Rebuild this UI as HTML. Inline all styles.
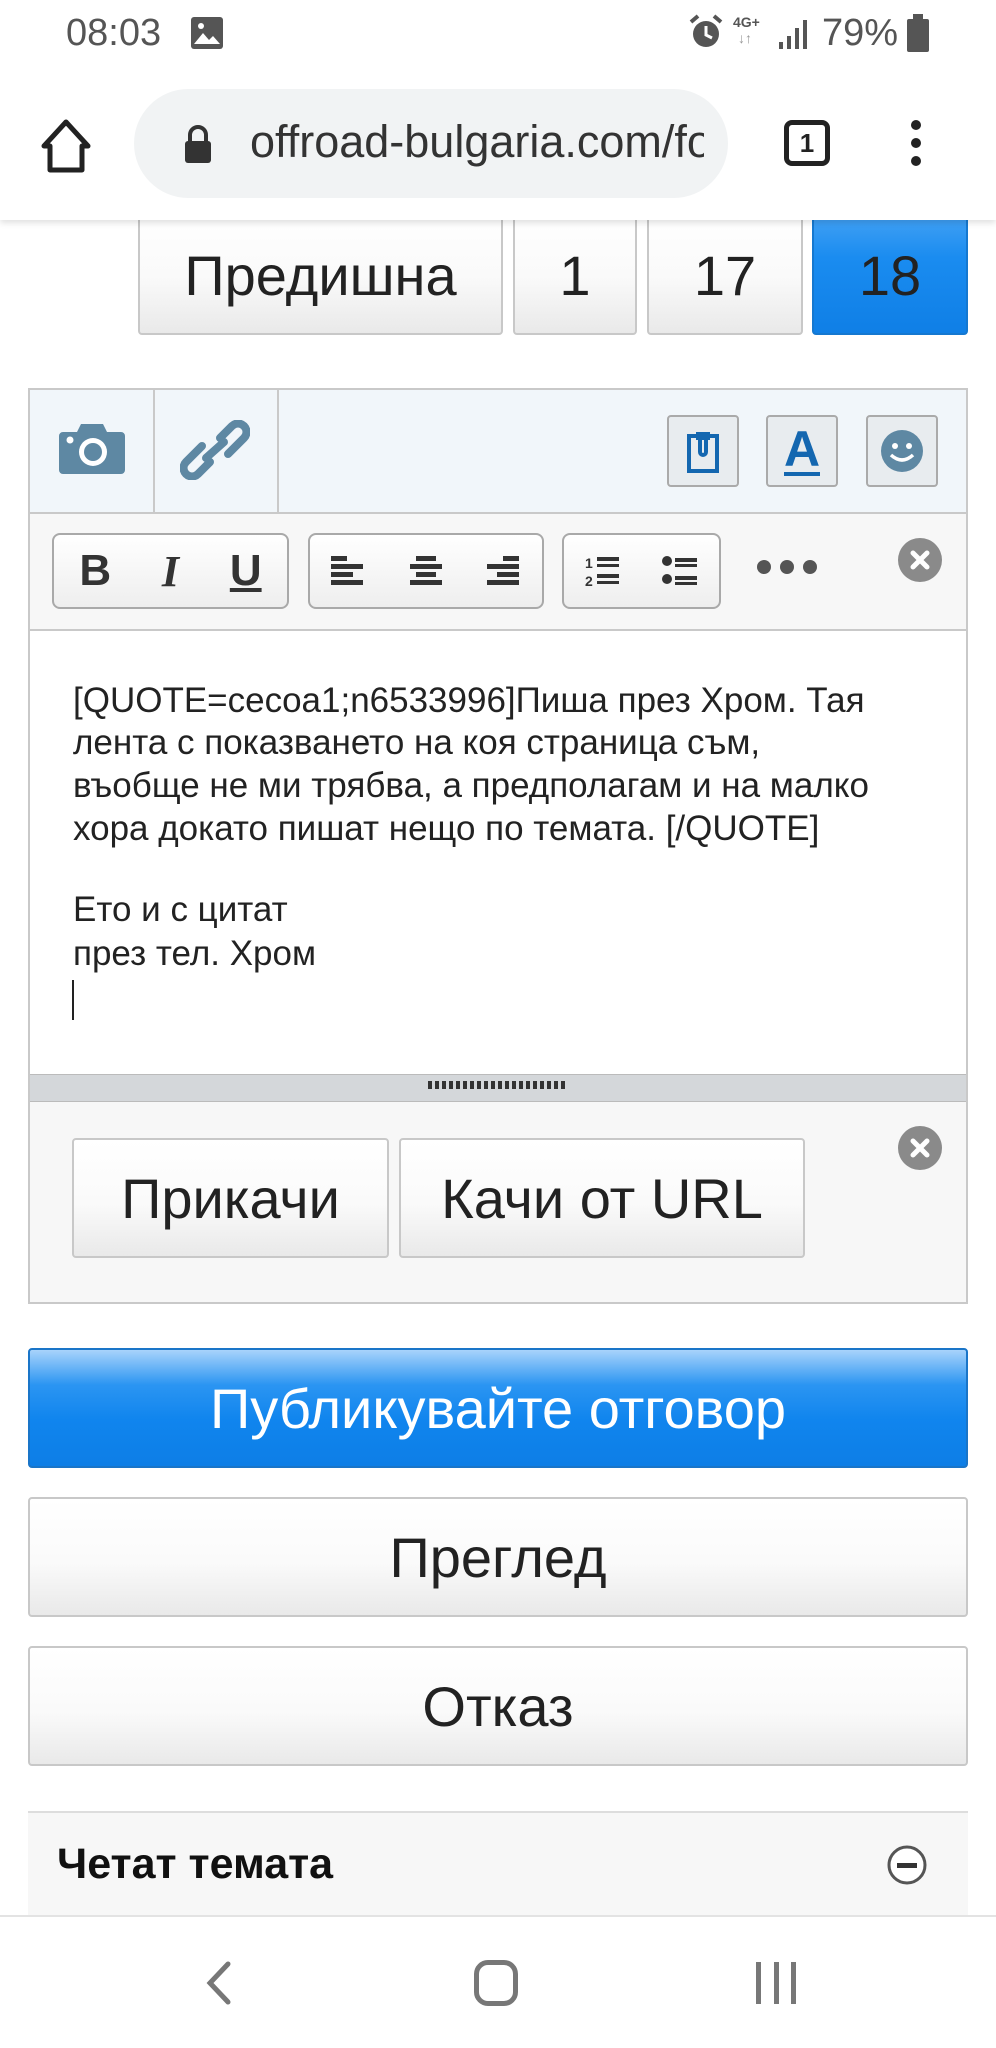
<!DOCTYPE html>
<html><head><meta charset="utf-8"><style>
*{box-sizing:border-box;margin:0;padding:0}
body{width:996px;height:2048px;position:relative;background:#fff;font-family:"Liberation Sans","DejaVu Sans",sans-serif;overflow:hidden;color:#222}
.a{position:absolute}
.btn{position:absolute;border:2px solid #c8c8c8;border-radius:4px;background:linear-gradient(#fff,#fafafa 55%,#e9e9e9);display:flex;align-items:center;justify-content:center;color:#222}
.tb{position:absolute;border:2px solid #a9a9a9;border-radius:8px;background:linear-gradient(#fff,#eee);display:flex;align-items:center;justify-content:space-around}
.ln{position:absolute;left:73px;font-size:35px;color:#222;white-space:nowrap}
.st{z-index:5}
</style></head><body>
<!-- chrome bar -->
<div class="a" style="left:0;top:0;width:996px;height:220px;box-shadow:0 3px 6px rgba(0,0,0,.12);background:#fff;z-index:2"></div>
<!-- status bar -->
<div class="a st" style="left:66px;top:12px;font-size:38px;color:#555">08:03</div>
<svg class="a st" style="left:190px;top:16px" width="34" height="34"><rect x="1" y="1" width="32" height="32" rx="3" fill="#555"/><path d="M4 28 L13 17 L19 24 L23 20 L30 28Z" fill="#fff"/><circle cx="11" cy="10" r="3" fill="#fff"/></svg>
<svg class="a st" style="left:688px;top:14px" width="36" height="36"><circle cx="18" cy="20" r="13" fill="#555"/><path d="M18 12v9l6 3" stroke="#fff" stroke-width="3" fill="none"/><path d="M3 8l7-6M33 8l-7-6" stroke="#555" stroke-width="4"/></svg>
<div class="a st" style="left:733px;top:14px;font-size:14px;font-weight:bold;color:#555">4G+</div>
<div class="a st" style="left:738px;top:30px;font-size:14px;color:#999">↓↑</div>
<svg class="a st" style="left:778px;top:18px" width="30" height="32"><rect x="1" y="24" width="4" height="7" fill="#555"/><rect x="9" y="18" width="4" height="13" fill="#555"/><rect x="17" y="10" width="4" height="21" fill="#555"/><rect x="25" y="2" width="4" height="29" fill="#555"/></svg>
<div class="a st" style="left:822px;top:12px;font-size:38px;color:#555">79%</div>
<svg class="a st" style="left:906px;top:14px" width="24" height="38"><rect x="7" y="0" width="10" height="5" fill="#555"/><rect x="1" y="5" width="22" height="33" rx="2" fill="#555"/></svg>
<div style="position:absolute;z-index:3;left:0;top:0;width:996px;height:220px">
<svg class="a" style="left:40px;top:118px" width="52" height="56"><path d="M26 4 L48 28 H42 V52 H10 V28 H4 Z" fill="none" stroke="#222" stroke-width="5" stroke-linejoin="round"/></svg>
<div class="a" style="left:134px;top:89px;width:594px;height:109px;border-radius:55px;background:#f1f3f4"></div>
<svg class="a" style="left:183px;top:124px" width="30" height="40"><path d="M7 17 V11 a8 8 0 0 1 16 0 V17" stroke="#333" stroke-width="4" fill="none"/><rect x="2" y="17" width="26" height="22" rx="3" fill="#333"/></svg>
<div class="a" style="left:250px;top:116px;width:454px;overflow:hidden;white-space:nowrap;font-size:45px;color:#333">offroad-bulgaria.com/forum</div>
<div class="a" style="left:784px;top:120px;width:46px;height:46px;border:5px solid #222;border-radius:8px;font-size:26px;font-weight:bold;text-align:center;line-height:36px">1</div>
<div class="a" style="left:911px;top:120px;width:10px;height:10px;border-radius:5px;background:#222"></div>
<div class="a" style="left:911px;top:138px;width:10px;height:10px;border-radius:5px;background:#222"></div>
<div class="a" style="left:911px;top:156px;width:10px;height:10px;border-radius:5px;background:#222"></div>
</div>
<!-- pagination -->
<div class="btn" style="left:138px;top:205px;width:365px;height:130px;padding-top:10px;font-size:56px">Предишна</div>
<div class="btn" style="left:513px;top:205px;width:124px;height:130px;padding-top:10px;font-size:56px">1</div>
<div class="btn" style="left:647px;top:205px;width:156px;height:130px;padding-top:10px;font-size:56px">17</div>
<div class="btn" style="left:812px;top:205px;width:156px;height:130px;padding-top:10px;font-size:56px;background:linear-gradient(#4aa5f5,#1a8cf0 40%,#0f7fe6);border-color:#1578d0">18</div>
<!-- editor -->
<div class="a" style="left:28px;top:388px;width:940px;height:916px;border:2px solid #c9c9c9;background:#f7f7f7"></div>
<div class="a" style="left:30px;top:390px;width:936px;height:124px;background:#f1f6fa;border-bottom:2px solid #c9c9c9"></div>
<div class="a" style="left:153px;top:390px;width:2px;height:124px;background:#c9c9c9"></div>
<div class="a" style="left:277px;top:390px;width:2px;height:124px;background:#c9c9c9"></div>
<svg class="a" style="left:57px;top:420px" width="70" height="56"><path d="M6 12 H20 L24 4 H46 L50 12 H64 a4 4 0 0 1 4 4 V50 a4 4 0 0 1 -4 4 H6 a4 4 0 0 1 -4 -4 V16 a4 4 0 0 1 4 -4Z" fill="#5e88a3"/><circle cx="36" cy="32" r="14" fill="#fff"/><circle cx="36" cy="32" r="9" fill="#5e88a3"/><circle cx="13" cy="20" r="3.5" fill="#fff"/></svg>
<svg class="a" style="left:180px;top:420px" width="70" height="60"><g fill="none" stroke="#5e88a3" stroke-width="8" stroke-linecap="round"><path d="M30 42 L18 54 a8 8 0 0 1 -12 -12 L22 26"/><path d="M40 18 L52 6 a8 8 0 0 1 12 12 L48 34"/><path d="M26 38 L44 22"/></g></svg>
<div class="tb" style="left:667px;top:415px;width:72px;height:72px;border-radius:4px;background:#e8ecef;border-color:#aaa"><svg width="34" height="46"><rect x="3" y="8" width="28" height="35" fill="none" stroke="#1467b0" stroke-width="4"/><path d="M14 4 V24 a3 3 0 0 0 6 0 V8" fill="none" stroke="#1467b0" stroke-width="4"/><rect x="10" y="4" width="14" height="8" fill="#1467b0"/></svg></div>
<div class="tb" style="left:766px;top:415px;width:72px;height:72px;border-radius:4px;background:#e8ecef;border-color:#aaa"><span style="font-size:50px;font-weight:bold;color:#1467b0;border-bottom:4px solid #1467b0;line-height:46px">A</span></div>
<div class="tb" style="left:866px;top:415px;width:72px;height:72px;border-radius:4px;background:#e8ecef;border-color:#aaa"><svg width="44" height="44"><circle cx="22" cy="22" r="21" fill="#5e88a3"/><circle cx="15" cy="17" r="3" fill="#fff"/><circle cx="29" cy="17" r="3" fill="#fff"/><path d="M11 26 Q22 36 33 26" stroke="#fff" stroke-width="3.5" fill="none"/></svg></div>
<!-- format toolbar -->
<div class="tb" style="left:52px;top:533px;width:237px;height:76px;font-size:44px;font-weight:bold;color:#333"><span>B</span><span style="font-family:'Liberation Serif',serif;font-style:italic">I</span><span style="text-decoration:underline">U</span></div>
<div class="tb" style="left:308px;top:533px;width:236px;height:76px"><svg width="36" height="30"><g fill="#333"><rect y="0" width="16" height="5"/><rect y="8" width="32" height="5"/><rect y="16" width="22" height="5"/><rect y="24" width="32" height="5"/></g></svg><svg width="36" height="30"><g fill="#333"><rect x="8" y="0" width="20" height="5"/><rect x="2" y="8" width="32" height="5"/><rect x="8" y="16" width="20" height="5"/><rect x="2" y="24" width="32" height="5"/></g></svg><svg width="36" height="30"><g fill="#333"><rect x="18" y="0" width="16" height="5"/><rect x="2" y="8" width="32" height="5"/><rect x="12" y="16" width="22" height="5"/><rect x="2" y="24" width="32" height="5"/></g></svg></div>
<div class="tb" style="left:562px;top:533px;width:159px;height:76px"><svg width="36" height="32"><text x="0" y="13" font-size="14" font-weight="bold" fill="#333" font-family="Liberation Sans">1</text><text x="0" y="31" font-size="14" font-weight="bold" fill="#333" font-family="Liberation Sans">2</text><g fill="#333"><rect x="12" y="2" width="22" height="4"/><rect x="12" y="9" width="22" height="3"/><rect x="12" y="19" width="22" height="4"/><rect x="12" y="26" width="22" height="3"/></g></svg><svg width="36" height="32"><g fill="#333"><circle cx="5" cy="6" r="5"/><circle cx="5" cy="24" r="5"/><rect x="13" y="3" width="22" height="4"/><rect x="13" y="9" width="22" height="3"/><rect x="13" y="21" width="22" height="4"/><rect x="13" y="27" width="22" height="3"/></g></svg></div>
<div class="a" style="left:757px;top:560px;width:60px;height:14px;display:flex;justify-content:space-between"><i style="width:14px;height:14px;border-radius:7px;background:#555"></i><i style="width:14px;height:14px;border-radius:7px;background:#555"></i><i style="width:14px;height:14px;border-radius:7px;background:#555"></i></div>
<svg class="a" style="left:898px;top:538px" width="44" height="44"><circle cx="22" cy="22" r="22" fill="#8a8a8a"/><path d="M15 15 L29 29 M29 15 L15 29" stroke="#fff" stroke-width="5" stroke-linecap="round"/></svg>
<!-- text area -->
<div class="a" style="left:30px;top:629px;width:936px;height:445px;background:#fff;border-top:2px solid #c9c9c9"></div>
<div class="ln" style="top:681px">[QUOTE=cecoa1;n6533996]Пиша през Хром. Тая</div>
<div class="ln" style="top:723px">лента с показването на коя страница съм,</div>
<div class="ln" style="top:766px">въобще не ми трябва, а предполагам и на малко</div>
<div class="ln" style="top:809px">хора докато пишат нещо по темата. [/QUOTE]</div>
<div class="ln" style="top:890px">Ето и с цитат</div>
<div class="ln" style="top:934px">през тел. Хром</div>
<div class="a" style="left:72px;top:980px;width:2px;height:40px;background:#222"></div>
<div class="a" style="left:30px;top:1074px;width:936px;height:28px;background:#d4d7da;border-top:1px solid #bbb;border-bottom:1px solid #bbb"></div>
<div class="a" style="left:428px;top:1081px;width:140px;height:8px;background:repeating-linear-gradient(90deg,#333 0 4px,transparent 4px 7px)"></div>
<!-- attachment -->
<div class="btn" style="left:72px;top:1138px;width:317px;height:120px;font-size:56px">Прикачи</div>
<div class="btn" style="left:399px;top:1138px;width:406px;height:120px;font-size:56px">Качи от URL</div>
<svg class="a" style="left:898px;top:1126px" width="44" height="44"><circle cx="22" cy="22" r="22" fill="#8a8a8a"/><path d="M15 15 L29 29 M29 15 L15 29" stroke="#fff" stroke-width="5" stroke-linecap="round"/></svg>
<!-- buttons -->
<div class="btn" style="left:28px;top:1348px;width:940px;height:120px;font-size:56px;color:#fff;border-color:#1a75c8;background:linear-gradient(#a8d3fb,#2b95f2 30%,#1085ee 60%,#0d7ee6)">Публикувайте отговор</div>
<div class="btn" style="left:28px;top:1497px;width:940px;height:120px;font-size:56px">Преглед</div>
<div class="btn" style="left:28px;top:1646px;width:940px;height:120px;font-size:56px">Отказ</div>
<div class="a" style="left:28px;top:1811px;width:940px;height:110px;background:#f7f7f7;border-top:2px solid #ddd"></div>
<div class="a" style="left:57px;top:1840px;font-size:43px;font-weight:bold;color:#111">Четат темата</div>
<svg class="a" style="left:887px;top:1845px" width="40" height="40"><circle cx="20" cy="20" r="18" fill="#fff" stroke="#555" stroke-width="3"/><rect x="10" y="18" width="20" height="5" fill="#333"/></svg>
<!-- nav bar -->
<div class="a" style="left:0;top:1915px;width:996px;height:133px;background:#fff;border-top:2px solid #e3e3e3"></div>
<svg class="a" style="left:200px;top:1958px" width="36" height="50"><path d="M28 6 L10 25 L28 44" fill="none" stroke="#777" stroke-width="5" stroke-linecap="round"/></svg>
<div class="a" style="left:474px;top:1960px;width:44px;height:46px;border:5px solid #777;border-radius:14px"></div>
<div class="a" style="left:756px;top:1962px;width:40px;height:42px;display:flex;justify-content:space-between"><i style="width:5px;background:#777"></i><i style="width:5px;background:#777"></i><i style="width:5px;background:#777"></i></div>
</body></html>
